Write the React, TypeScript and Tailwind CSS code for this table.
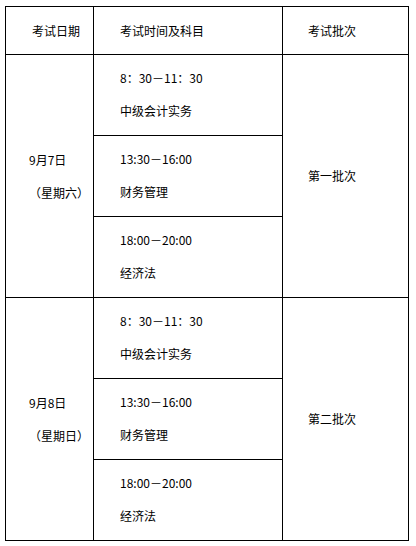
const font = { fontFamily: '"Noto Sans CJK SC", "Noto Sans", sans-serif' };

type Session = { time: string; subject: string };

const sessions: Session[] = [
  { time: "8：30－11：30", subject: "中级会计实务" },
  { time: "13:30－16:00", subject: "财务管理" },
  { time: "18:00－20:00", subject: "经济法" },
];

const days = [
  { date: "9月7日", week: "（星期六）", batch: "第一批次" },
  { date: "9月8日", week: "（星期日）", batch: "第二批次" },
];

function SessionCell({ s }: { s: Session }) {
  return (
    <div className="border-r border-b border-black flex flex-col justify-center gap-[17px] pl-[26px] pb-[1px]">
      <p className="leading-4">{s.time}</p>
      <p className="leading-4">{s.subject}</p>
    </div>
  );
}

export default function App() {
  return (
    <div className="min-h-screen bg-white pt-[6px] pl-[5px] text-black text-[12px]" style={font}>
      <div className="grid w-[404px] grid-cols-[88px_189px_126px] grid-rows-[48px_repeat(6,81px)] border-l border-t border-black">
        {/* Header */}
        <div className="border-r border-b border-black flex items-center pl-[26px]">考试日期</div>
        <div className="border-r border-b border-black flex items-center pl-[26px]">考试时间及科目</div>
        <div className="border-r border-b border-black flex items-center pl-[25px]">考试批次</div>

        {days.map((d, di) => (
          <div key={d.date} className="contents">
            <div
              className={
                di === 0
                  ? "row-start-2 row-span-3 col-start-1 border-r border-b border-black flex flex-col justify-center gap-[17px] pl-[23px]"
                  : "row-start-5 row-span-3 col-start-1 border-r border-b border-black flex flex-col justify-center gap-[17px] pl-[23px]"
              }
            >
              <p className="leading-4">{d.date}</p>
              <p className="leading-4">{d.week}</p>
            </div>
            <div
              className={
                di === 0
                  ? "row-start-2 row-span-3 col-start-3 border-r border-b border-black flex items-center pl-[25px]"
                  : "row-start-5 row-span-3 col-start-3 border-r border-b border-black flex items-center pl-[25px]"
              }
            >
              {d.batch}
            </div>
          </div>
        ))}

        {[0, 1].map((b) =>
          sessions.map((s, i) => (
            <div
              key={`${b}-${i}`}
              className="col-start-2 grid"
              style={{ gridRowStart: 2 + b * 3 + i }}
            >
              <SessionCell s={s} />
            </div>
          ))
        )}
      </div>
    </div>
  );
}
